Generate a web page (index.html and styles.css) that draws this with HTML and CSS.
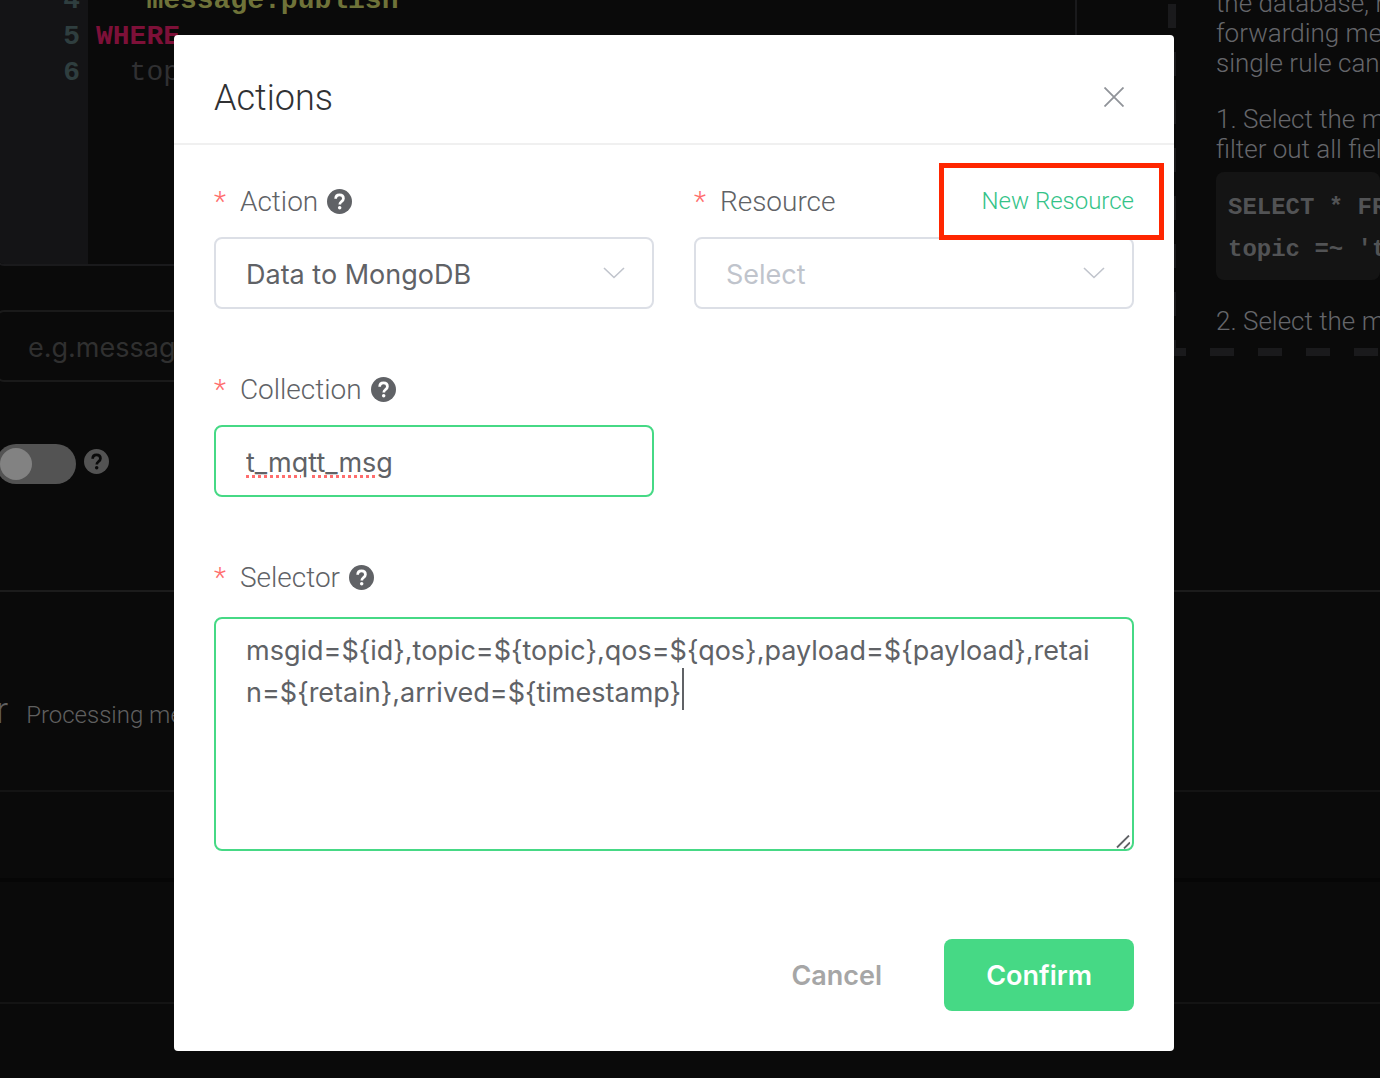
FILE: index.html
```html
<!DOCTYPE html>
<html lang="en">
<head>
    <meta charset="UTF-8">
    <meta name="viewport" content="width=device-width, initial-scale=1.0">
    <title>Rule Engine</title>
    <link rel="stylesheet" href="styles.css">
</head>
<body>
    <svg class="sprite" aria-hidden="true">
        <symbol id="icon-help" viewBox="0 0 26 26">
            <circle cx="13" cy="13" r="13" fill="currentColor"/>
            <path class="mark" d="M9 10.2C9 7.800 10.600 6.200 13 6.200s4.100 1.500 4.100 3.600c0 1.800-1 2.600-2.100 3.400-1 .8-1.700 1.300-1.700 2.900" fill="none" stroke-width="2.800"/>
            <circle class="mark-dot" cx="13.200" cy="19.600" r="1.800"/>
        </symbol>
        <symbol id="icon-arrow" viewBox="0 0 22 12">
            <path d="M1 1l10 9.500L21 1" fill="none" stroke="currentColor" stroke-width="1.600"/>
        </symbol>
    </svg>

    <main class="page">
        <div class="rule">
            <div class="rule-form">
                <div class="editor">
                    <div class="gutter"><span>4</span><span>5</span><span>6</span></div>
                    <pre class="code"><span class="string">  "message.publish"</span>
<span class="keyword">WHERE</span>
  topic</pre>
                </div>
                <input class="note" type="text" placeholder="e.g.message" aria-label="Note">
                <div class="switch-row">
                    <input class="switch" type="checkbox" aria-label="Enable">
                    <svg class="help"><use href="#icon-help"/></svg>
                </div>
            </div>
            <aside class="guide">
                <div class="guide-text">
                    <p>the database, message<br>forwarding messages<br>single rule can</p>
                    <p>1. Select the messages<br>filter out all fields</p>
                    <pre>SELECT * FROM
topic =~ 't/#'</pre>
                    <p>2. Select the messages<br>filter out "id" field</p>
                </div>
            </aside>
        </div>
        <section class="handler">
            <h2>r</h2>
            <p>Processing me</p>
        </section>
        <div class="row row-first"></div>
        <div class="row row-second"></div>
    </main>

    <div class="overlay">
        <form class="dialog" role="dialog" aria-labelledby="dialog-title">
            <header class="dialog-header">
                <h1 id="dialog-title">Actions</h1>
                <button class="close" type="button" aria-label="Close">
                    <svg viewBox="0 0 20 20"><path d="M0.500 0.500l19 19M19.500 0.500l-19 19" stroke="currentColor" stroke-width="1.800"/></svg>
                </button>
            </header>
            <div class="dialog-body">
                <div class="field">
                    <div class="label-row">
                        <label for="action">Action</label>
                        <svg class="help"><use href="#icon-help"/></svg>
                    </div>
                    <div class="select">
                        <select id="action"><option>Data to MongoDB</option></select>
                        <svg class="arrow"><use href="#icon-arrow"/></svg>
                    </div>
                </div>
                <div class="field">
                    <div class="label-row">
                        <label for="resource">Resource</label>
                        <a class="new-resource" href="#">New Resource</a>
                    </div>
                    <div class="select">
                        <select id="resource" class="empty"><option>Select</option></select>
                        <svg class="arrow"><use href="#icon-arrow"/></svg>
                    </div>
                </div>
                <div class="field">
                    <div class="label-row">
                        <label for="collection">Collection</label>
                        <svg class="help"><use href="#icon-help"/></svg>
                    </div>
                    <input id="collection" class="misspelled" type="text" value="t_mqtt_msg" spellcheck="false">
                </div>
                <div class="field wide">
                    <div class="label-row">
                        <label for="selector">Selector</label>
                        <svg class="help"><use href="#icon-help"/></svg>
                    </div>
                    <div class="textarea">
                        <textarea id="selector" spellcheck="false">msgid=${id},topic=${topic},qos=${qos},payload=${payload},retain=${retain},arrived=${timestamp}</textarea>
                        <span class="caret"></span>
                        <svg class="grip" viewBox="0 0 14 14"><path d="M1 12.500L13 0.500M8 13.500l6-6" stroke="currentColor" stroke-width="1.800"/></svg>
                    </div>
                </div>
            </div>
            <footer class="dialog-footer">
                <button class="cancel" type="button">Cancel</button>
                <button class="confirm" type="submit">Confirm</button>
            </footer>
        </form>
    </div>
</body>
</html>
```
FILE: styles.css
```css
* {
    box-sizing: border-box;
}
body {
    margin: 0;
    min-height: 100vh;
    overflow: hidden;
    background-color: #0a0a0a;
    color: #606266;
    font-family: Roboto, sans-serif;
    font-size: 28px;
    font-weight: 300;
}
h1, h2, p, pre {
    margin: 0;
    font-weight: 300;
}
input, select, textarea, button {
    font-family: Inter, sans-serif;
    font-size: 27px;
    font-weight: 400;
    color: #606266;
}
.sprite {
    position: absolute;
    width: 0;
    height: 0;
}
.help {
    width: 25px;
    height: 25px;
    color: #606266;
    --mark: #fff;
}
.mark {
    stroke: var(--mark);
}
.mark-dot {
    fill: var(--mark);
}

/* page behind the dialog */
.page {
    margin: -18px 0 0 -4px;
}
.rule {
    display: flex;
    align-items: flex-start;
    gap: 91px;
    height: 610px;
    border-bottom: 2px solid #1c1c1c;
}
.rule-form {
    flex: 1;
    min-width: 0;
}
.editor {
    display: flex;
    height: 284px;
    padding-top: 1px;
    border: 2px solid #1a1a1c;
    border-top: 0;
    border-radius: 0 0 8px 8px;
    overflow: hidden;
    font-family: "Liberation Mono", monospace;
    line-height: 36px;
}
.gutter {
    display: flex;
    flex-direction: column;
    width: 90px;
    padding-right: 8px;
    background-color: #141416;
    color: #2f3e3f;
    font-weight: 700;
    text-align: right;
}
.code {
    padding-left: 8px;
    color: #303032;
    font-family: inherit;
}
.string {
    color: #6f7339;
    font-weight: 700;
}
.keyword {
    color: #7d1038;
    font-weight: 700;
}
.note {
    display: block;
    width: 100%;
    height: 72px;
    margin-top: 44px;
    padding: 2px 30px 0;
    border: 2px solid #1a1a1a;
    border-radius: 8px;
    background: none;
}
.note::placeholder {
    color: #303030;
}
.switch-row {
    display: flex;
    gap: 8px;
    margin-top: 62px;
}
.switch-row .help {
    margin-top: 5px;
    color: #535353;
    --mark: #0a0a0a;
}
.switch {
    appearance: none;
    width: 80px;
    height: 40px;
    margin: 0;
    padding: 4px;
    border-radius: 20px;
    background-color: #535353;
}
.switch::before {
    content: "";
    display: block;
    width: 32px;
    height: 32px;
    border-radius: 16px;
    background-color: #828282;
}
.guide {
    width: 212px;
    height: 374px;
    padding: 0 0 16px 48px;
    background:
        repeating-linear-gradient(to bottom, transparent 0 22px, #1a1a1c 22px 46px, transparent 46px 48px) left top / 8px 100% no-repeat,
        repeating-linear-gradient(to right, #1a1a1c 0 18px, transparent 18px 42px, #1a1a1c 42px 48px) left bottom / 100% 8px no-repeat;
    font-size: 26px;
    line-height: 30px;
    white-space: nowrap;
}
.guide-text {
    height: 358px;
    padding-top: 6px;
    overflow: hidden;
}
.guide p {
    margin-bottom: 26px;
    color: #65666a;
}
.guide pre {
    margin: -18px 0 26px;
    padding: 15px 12px 9px;
    border-radius: 8px;
    background-color: #141414;
    color: #525355;
    font: 700 24px/42px "Liberation Mono", monospace;
}
.handler {
    display: flex;
    align-items: baseline;
    gap: 18px;
    height: 200px;
    padding-top: 98px;
    border-bottom: 2px solid #141414;
    color: #606060;
}
.handler h2 {
    font-size: 36px;
}
.handler p {
    font-size: 24px;
}
.row-first {
    height: 90px;
    border-bottom: 4px solid #060606;
}
.row-second {
    height: 122px;
    border-bottom: 2px solid #141414;
}

/* dialog */
.overlay {
    position: absolute;
    inset: 0;
    display: flex;
    justify-content: center;
    align-items: flex-start;
    padding: 35px 32px 0 0;
}
.dialog {
    width: 100%;
    max-width: 1000px;
    border-radius: 4px;
    background-color: #fff;
}
.dialog-header {
    display: flex;
    align-items: center;
    justify-content: space-between;
    padding: 38px 50px 22px 40px;
    border-bottom: 2px solid #f0f0f0;
}
.dialog-header h1 {
    padding-top: 2px;
    color: #303133;
    font-size: 36px;
    line-height: 46px;
}
.close {
    display: flex;
    padding: 0;
    border: 0;
    background: none;
    color: #909399;
}
.close svg {
    width: 20px;
    height: 20px;
}
.dialog-body {
    display: grid;
    grid-template-columns: 1fr 1fr;
    gap: 44px 40px;
    padding: 20px 40px 88px;
}
.field.wide {
    grid-column: 1 / -1;
}
.label-row {
    display: flex;
    align-items: center;
    height: 72px;
    gap: 9px;
}
.label-row label::before {
    content: "*";
    margin-right: 14px;
    color: #ff6d6d;
}
.new-resource {
    position: relative;
    margin-left: auto;
    color: #34c388;
    font-size: 24px;
    text-decoration: none;
}
/* red frame marking the link */
.new-resource::after {
    content: "";
    position: absolute;
    inset: -24px -30px -25px -42px;
    border: 5px solid #ff2600;
    z-index: 1;
}
.select, .textarea {
    position: relative;
}
.field select, .field input, .field textarea {
    display: block;
    width: 100%;
    height: 72px;
    padding: 2px 30px 0;
    border: 2px solid #dcdfe6;
    border-radius: 8px;
    outline: 0;
    background-color: #fff;
    appearance: none;
}
.field select.empty {
    color: #c0c4cc;
}
.arrow {
    position: absolute;
    top: 30px;
    right: 29px;
    width: 22px;
    height: 12px;
    color: #c0c4cc;
    pointer-events: none;
}
.field input, .field textarea {
    border-color: #46d985;
}
.misspelled {
    text-decoration: underline dotted #ff6d6d 3px;
    text-underline-offset: 3px;
}
.field .textarea {
    margin-top: 4px;
}
.field textarea {
    height: 234px;
    padding: 11px 30px;
    line-height: 42px;
    word-break: break-all;
    resize: none;
}
.caret {
    position: absolute;
    top: 51px;
    left: 468px;
    width: 2px;
    height: 42px;
    background-color: #606266;
}
.grip {
    position: absolute;
    right: 4px;
    bottom: 2px;
    width: 14px;
    height: 14px;
}
.dialog-footer {
    display: flex;
    justify-content: flex-end;
    gap: 20px;
    padding: 0 40px 40px;
}
.dialog-footer button {
    height: 72px;
    padding: 0 42px;
    border: 0;
    border-radius: 8px;
    background: none;
    font-weight: 600;
}
.dialog-footer .cancel {
    color: #a6a6a6;
}
.dialog-footer .confirm {
    background-color: #46d985;
    color: #fff;
}
```
